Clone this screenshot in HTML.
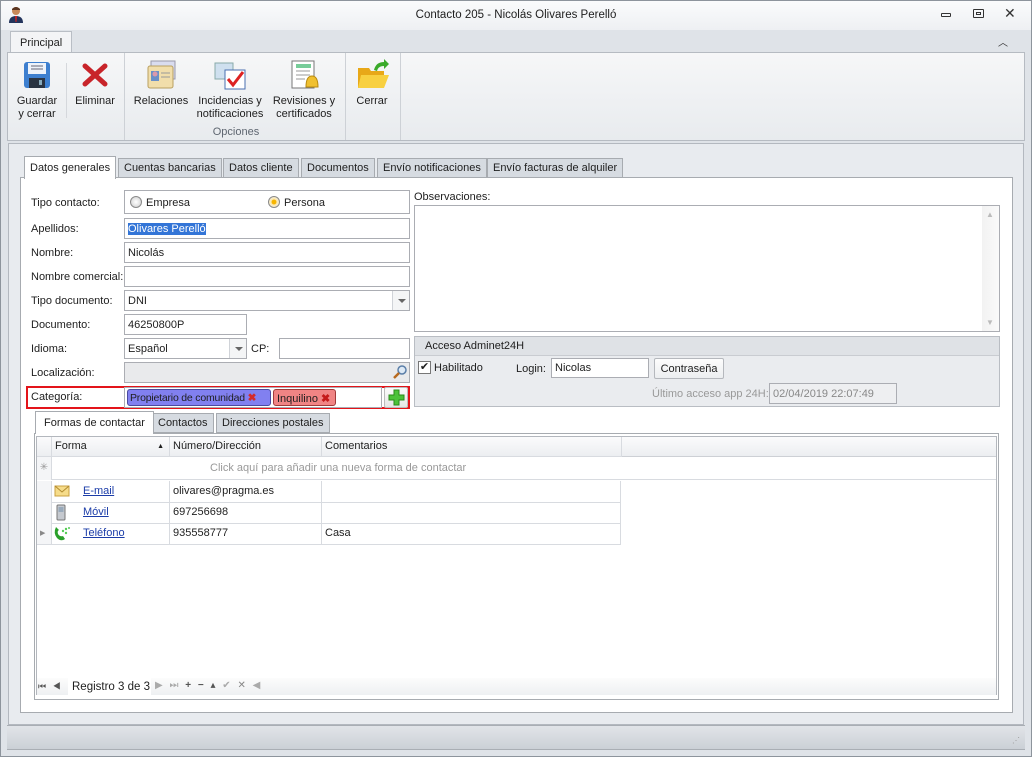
<!DOCTYPE html>
<html><head><meta charset="utf-8">
<style>
*{box-sizing:border-box;margin:0;padding:0}
body{width:1032px;height:757px;position:relative;overflow:hidden;font-family:"Liberation Sans",sans-serif;font-size:11px;color:#1e1e1e;background:#dfe3e8}
.a{position:absolute}
.inp{position:absolute;background:#fff;border:1px solid #abadb3;height:21px;padding:4px 3px 2px;white-space:nowrap}
.lbl{position:absolute;white-space:nowrap}
.tab{position:absolute;top:158px;height:20px;border:1px solid #a7abb0;background:#d6dbe1;padding:3px 5px;white-space:nowrap}
.btn{position:absolute;text-align:center;line-height:13px;font-size:11px}
.dd{position:absolute;right:0;top:0;width:17px;height:19px;border-left:1px solid #d0d3d8;background:#f4f5f6}
.dd:after{content:"";position:absolute;left:5px;top:8px;border:4px solid transparent;border-top:4px solid #666;border-bottom:0}
.cell{position:absolute;border-right:1px solid #d8dbe0;border-bottom:1px solid #d8dbe0;padding:4px 4px;white-space:nowrap}
a{color:#1b3ca8;text-decoration:underline}
</style></head><body>
<div class="a" style="left:0;top:0;width:1032px;height:757px;border:1px solid #8d949c;background:#dfe3e8"></div>
<div class="a" style="left:1px;top:1px;width:1030px;height:29px;background:linear-gradient(#fafbfc,#eef0f3)"></div>
<svg class="a" style="left:8px;top:6px" width="16" height="18"><circle cx="8" cy="5" r="4" fill="#c88a5a"/><path d="M4 3 Q8 -1 12 3 L12 4 L4 4Z" fill="#5a3520"/><path d="M1 17 Q1 10 8 10 Q15 10 15 17Z" fill="#23345c"/><path d="M7 10 L9 10 L8.5 16 L7.5 16Z" fill="#c22"/></svg>
<div class="lbl" style="left:0;width:1032px;text-align:center;top:9px;font-size:11.5px">Contacto 205 - Nicolás Olivares Perelló</div>
<div class="a" style="left:941px;top:13px;width:10px;height:4px;border:1px solid #333;border-radius:1px"></div>
<div class="a" style="left:973px;top:9px;width:11px;height:9px;border:1px solid #333;border-radius:1px"><div style="margin:2px;width:5px;height:3px;border:1px solid #333"></div></div>
<div class="lbl" style="left:1004px;top:5px;font-size:14px;color:#333">✕</div>
<div class="lbl" style="left:998px;top:34px;font-size:10px;color:#333">︿</div>
<div class="a" style="left:10px;top:31px;width:62px;height:22px;background:#f3f4f6;border:1px solid #b9bec5;border-bottom:none;padding:5px 9px">Principal</div>
<div class="a" style="left:7px;top:52px;width:1018px;height:89px;background:linear-gradient(#f6f7f8,#e8ebee);border:1px solid #b6bbc2"></div>
<div class="a" style="left:124px;top:53px;width:1px;height:87px;background:#cdd1d6"></div>
<div class="a" style="left:345px;top:53px;width:1px;height:87px;background:#cdd1d6"></div>
<div class="a" style="left:400px;top:53px;width:1px;height:87px;background:#cdd1d6"></div>
<div class="a" style="left:66px;top:63px;width:1px;height:55px;background:#d5d8dc"></div>
<svg class="a" style="left:23px;top:61px" width="28" height="28"><rect x="1" y="1" width="26" height="26" rx="3" fill="#3d7fcf"/><rect x="5" y="2" width="18" height="11" fill="#eef3fa"/><line x1="8" y1="5" x2="20" y2="5" stroke="#667" /><line x1="8" y1="8" x2="20" y2="8" stroke="#667"/><rect x="6" y="17" width="16" height="10" fill="#2a3442"/><rect x="16" y="19" width="3" height="5" fill="#8ab"/></svg>
<svg class="a" style="left:82px;top:63px" width="26" height="24"><path d="M3 3 L23 21 M23 3 L3 21" stroke="#c8242a" stroke-width="5" stroke-linecap="round"/></svg>
<svg class="a" style="left:145px;top:59px" width="32" height="32"><rect x="6" y="2" width="24" height="18" fill="#d9dcef" stroke="#99a"/><rect x="3" y="7" width="25" height="22" rx="2" fill="#f1deab" stroke="#b9a060"/><rect x="6" y="12" width="8" height="10" fill="#6a90c8"/><circle cx="10" cy="15" r="2.5" fill="#d9a"/><line x1="16" y1="14" x2="25" y2="14" stroke="#999"/><line x1="16" y1="18" x2="25" y2="18" stroke="#999"/></svg>
<svg class="a" style="left:213px;top:59px" width="34" height="32"><path d="M2 4 L20 4 L20 20 L2 20Z" fill="#cfe0ef" stroke="#8aa"/><rect x="12" y="11" width="20" height="19" fill="#fff" stroke="#4a6fb0"/><path d="M15 20 L20 26 L30 13" stroke="#d22" stroke-width="3" fill="none"/></svg>
<svg class="a" style="left:289px;top:59px" width="32" height="32"><rect x="3" y="2" width="22" height="27" fill="#fff" stroke="#777"/><rect x="7" y="5" width="15" height="4" fill="#7c9"/><line x1="7" y1="12" x2="21" y2="12" stroke="#999"/><line x1="7" y1="16" x2="21" y2="16" stroke="#999"/><line x1="7" y1="20" x2="16" y2="20" stroke="#999"/><path d="M17 28 Q17 17 23 17 Q29 17 29 28Z" fill="#f0c030" stroke="#b88a10"/></svg>
<svg class="a" style="left:356px;top:58px" width="34" height="32"><path d="M2 10 L13 10 L15 13 L28 13 L28 30 L2 30Z" fill="#e8a818"/><path d="M5 17 L33 17 L28 30 L2 30Z" fill="#f8d040"/><path d="M18 12 Q20 4 28 4 L28 1 L33 6 L28 11 L28 8 Q22 8 21 13Z" fill="#3aaa2a"/></svg>
<div class="btn" style="left:14px;top:95px;width:46px">Guardar<br>y cerrar</div>
<div class="btn" style="left:72px;top:95px;width:46px">Eliminar</div>
<div class="btn" style="left:131px;top:95px;width:60px">Relaciones</div>
<div class="btn" style="left:194px;top:95px;width:72px">Incidencias y<br>notificaciones</div>
<div class="btn" style="left:268px;top:95px;width:72px">Revisiones y<br>certificados</div>
<div class="btn" style="left:352px;top:95px;width:40px">Cerrar</div>
<div class="btn" style="left:200px;top:126px;width:72px;color:#5e6670">Opciones</div>
<div class="a" style="left:8px;top:143px;width:1016px;height:582px;border:1px solid #b3b8bf;background:#e8ebef"></div>
<div class="a" style="left:20px;top:177px;width:993px;height:536px;background:#fff;border:1px solid #a7abb0"></div>
<div class="tab" style="left:24px;top:156px;height:23px;background:#fff;border-bottom:none;padding-top:5px">Datos generales</div>
<div class="tab" style="left:118px">Cuentas bancarias</div>
<div class="tab" style="left:223px">Datos cliente</div>
<div class="tab" style="left:301px">Documentos</div>
<div class="tab" style="left:377px">Envío notificaciones</div>
<div class="tab" style="left:487px">Envío facturas de alquiler</div>
<div class="lbl" style="left:31px;top:197px">Tipo contacto:</div>
<div class="a" style="left:124px;top:190px;width:286px;height:24px;border:1px solid #abadb3;background:#fff"></div>
<div class="a" style="left:130px;top:196px;width:12px;height:12px;border-radius:50%;border:1px solid #8a8a8a;background:radial-gradient(#fff,#ccc)"></div>
<div class="lbl" style="left:146px;top:197px">Empresa</div>
<div class="a" style="left:268px;top:196px;width:12px;height:12px;border-radius:50%;border:1px solid #8a8a8a;background:radial-gradient(#f7b500 30%,#fde9b0 40%,#eee)"></div>
<div class="lbl" style="left:284px;top:197px">Persona</div>
<div class="lbl" style="left:31px;top:223px">Apellidos:</div>
<div class="inp" style="left:124px;top:218px;width:286px"><span style="background:#3375d7;color:#fff">Olivares Perelló</span></div>
<div class="lbl" style="left:31px;top:247px">Nombre:</div>
<div class="inp" style="left:124px;top:242px;width:286px">Nicolás</div>
<div class="lbl" style="left:31px;top:271px">Nombre comercial:</div>
<div class="inp" style="left:124px;top:266px;width:286px"></div>
<div class="lbl" style="left:31px;top:295px">Tipo documento:</div>
<div class="inp" style="left:124px;top:290px;width:286px">DNI<div class="dd"></div></div>
<div class="lbl" style="left:31px;top:319px">Documento:</div>
<div class="inp" style="left:124px;top:314px;width:123px">46250800P</div>
<div class="lbl" style="left:31px;top:343px">Idioma:</div>
<div class="inp" style="left:124px;top:338px;width:123px">Español<div class="dd"></div></div>
<div class="lbl" style="left:251px;top:343px">CP:</div>
<div class="inp" style="left:279px;top:338px;width:131px"></div>
<div class="lbl" style="left:31px;top:367px">Localización:</div>
<div class="inp" style="left:124px;top:362px;width:286px;background:#e9eaec"></div>
<svg class="a" style="left:392px;top:364px" width="16" height="16"><circle cx="10" cy="6" r="4" fill="#dde9f5" stroke="#5a7ea8" stroke-width="1.5"/><path d="M7 9 L2 14" stroke="#b86a20" stroke-width="2.5"/></svg>
<div class="a" style="left:26px;top:386px;width:384px;height:23px;border:2px solid #e3141a"></div>
<div class="lbl" style="left:31px;top:391px">Categoría:</div>
<div class="a" style="left:124px;top:387px;width:258px;height:21px;border:1px solid #abadb3;background:#fff"></div>
<div class="a" style="left:127px;top:389px;width:144px;height:17px;background:#8180f0;border:1px solid #4a4aa0;border-radius:3px;padding:2px 2px;white-space:nowrap;font-size:10.5px;letter-spacing:-0.2px;overflow:hidden">Propietario de comunidad <span style="color:#d42a2a;font-weight:bold">✖</span></div>
<div class="a" style="left:273px;top:389px;width:63px;height:17px;background:#f08484;border:1px solid #a03a3a;border-radius:3px;padding:2px 3px;white-space:nowrap;overflow:hidden">Inquilino <span style="color:#c41a1a;font-weight:bold">✖</span></div>
<div class="a" style="left:384px;top:387px;width:24px;height:21px;border:1px solid #bbb;background:linear-gradient(#fbfbfb,#e6e6e6);border-radius:2px"></div>
<svg class="a" style="left:388px;top:389px" width="17" height="17"><path d="M6 1H11V6H16V11H11V16H6V11H1V6H6Z" fill="#4cc23a" stroke="#2a8a1a"/></svg>
<div class="lbl" style="left:414px;top:191px">Observaciones:</div>
<div class="a" style="left:414px;top:205px;width:586px;height:127px;border:1px solid #abadb3;background:#fff"></div>
<div class="a" style="left:982px;top:206px;width:17px;height:125px;background:linear-gradient(90deg,#f2f2f2,#fafafa)"></div>
<div class="lbl" style="left:986px;top:210px;font-size:8px;color:#bbb">▲</div>
<div class="lbl" style="left:986px;top:318px;font-size:8px;color:#bbb">▼</div>
<div class="a" style="left:414px;top:336px;width:586px;height:71px;border:1px solid #b9bdc3;background:#eaecef"></div>
<div class="a" style="left:415px;top:337px;width:584px;height:19px;background:#dfe2e6;border-bottom:1px solid #c9ccd1;padding:3px 10px">Acceso Adminet24H</div>
<div class="a" style="left:418px;top:361px;width:13px;height:13px;border:1px solid #777;background:#fff;font-size:11px;line-height:11px;text-align:center">✔</div>
<div class="lbl" style="left:434px;top:362px">Habilitado</div>
<div class="lbl" style="left:516px;top:363px">Login:</div>
<div class="inp" style="left:551px;top:358px;width:98px;height:20px;padding-top:3px">Nicolas</div>
<div class="a" style="left:654px;top:358px;width:70px;height:21px;border:1px solid #b5b8bd;border-radius:2px;background:linear-gradient(#fdfdfd,#eceef0);text-align:center;padding-top:4px">Contraseña</div>
<div class="lbl" style="left:652px;top:388px;color:#999">Último acceso app 24H:</div>
<div class="inp" style="left:769px;top:383px;width:128px;height:21px;background:#eeeff1;color:#888">02/04/2019 22:07:49</div>
<div class="a" style="left:34px;top:433px;width:965px;height:267px;border:1px solid #a7abb0;background:#fff"></div>
<div class="tab" style="left:152px;top:413px">Contactos</div>
<div class="tab" style="left:216px;top:413px">Direcciones postales</div>
<div class="tab" style="left:35px;top:411px;height:23px;background:#fff;border-bottom:none;padding:5px 8px">Formas de contactar</div>
<div class="a" style="left:36px;top:436px;width:961px;height:259px;border:1px solid #b3b7bd;background:#fff"></div>
<div class="a" style="left:37px;top:437px;width:959px;height:20px;background:linear-gradient(#fbfbfc,#eceef1);border-bottom:1px solid #cdd0d5"></div>
<div class="cell" style="left:37px;top:437px;width:15px;height:20px"></div>
<div class="cell" style="left:51px;top:437px;width:119px;height:20px;padding-top:3px">Forma<span style="position:absolute;right:5px;font-size:7px;top:6px">▲</span></div>
<div class="cell" style="left:169px;top:437px;width:153px;height:20px;padding-top:3px">Número/Dirección</div>
<div class="cell" style="left:321px;top:437px;width:301px;height:20px;padding-top:3px">Comentarios</div>
<div class="a" style="left:37px;top:457px;width:959px;height:23px;border-bottom:1px solid #d8dbe0"></div>
<div class="a" style="left:37px;top:457px;width:15px;height:23px;background:#f4f5f7;border-right:1px solid #d8dbe0;color:#999;font-size:10px;text-align:center;padding-top:5px">✳</div>
<div class="lbl" style="left:210px;top:462px;color:#999">Click aquí para añadir una nueva forma de contactar</div>
<div class="cell" style="left:37px;top:481px;width:15px;height:22px;background:#f4f5f7"></div>
<div class="cell" style="left:51px;top:481px;width:119px;height:22px;padding-left:32px"><a>E-mail</a></div>
<div class="cell" style="left:169px;top:481px;width:153px;height:22px">olivares@pragma.es</div>
<div class="cell" style="left:321px;top:481px;width:300px;height:22px"></div>
<div class="cell" style="left:37px;top:502px;width:15px;height:22px;background:#f4f5f7"></div>
<div class="cell" style="left:51px;top:502px;width:119px;height:22px;padding-left:32px"><a>Móvil</a></div>
<div class="cell" style="left:169px;top:502px;width:153px;height:22px">697256698</div>
<div class="cell" style="left:321px;top:502px;width:300px;height:22px"></div>
<div class="cell" style="left:37px;top:523px;width:15px;height:22px;background:#f4f5f7;font-size:7px;color:#888;padding:6px 3px">▶</div>
<div class="cell" style="left:51px;top:523px;width:119px;height:22px;padding-left:32px"><a>Teléfono</a></div>
<div class="cell" style="left:169px;top:523px;width:153px;height:22px">935558777</div>
<div class="cell" style="left:321px;top:523px;width:300px;height:22px">Casa</div>
<svg class="a" style="left:54px;top:485px" width="16" height="13"><rect x="1" y="1" width="14" height="10" fill="#f6dc8a" stroke="#c9a040"/><path d="M1 1 L8 7 L15 1" stroke="#b08a30" fill="none"/></svg>
<svg class="a" style="left:56px;top:504px" width="10" height="17"><rect x="1" y="1" width="8" height="15" rx="1" fill="#c5c9cf" stroke="#777"/><rect x="2.5" y="3" width="5" height="5" fill="#9ab"/></svg>
<svg class="a" style="left:53px;top:525px" width="18" height="17"><path d="M3 2 Q0 8 4 13 Q8 17 12 14 L10 11 Q7 12 5 9 Q4 6 6 5Z" fill="#2aa02a"/><circle cx="10" cy="6" r="1.2" fill="#5c5"/><circle cx="13" cy="4" r="1.2" fill="#5c5"/><circle cx="13" cy="8" r="1.2" fill="#5c5"/><circle cx="16" cy="3" r="1" fill="#5c5"/></svg>
<div class="a" style="left:37px;top:678px;width:959px;height:17px;background:linear-gradient(#fcfcfc,#eef0f2)"></div>
<div class="lbl" style="left:38px;top:681px;font-size:9px;color:#555;letter-spacing:2px">⏮ ◀</div>
<div class="a" style="left:68px;top:678px;width:83px;height:17px;background:#fff;padding:3px 4px;white-space:nowrap;font-size:11.5px">Registro 3 de 3</div>
<div class="lbl" style="left:155px;top:680px;font-size:10px;color:#aaa;letter-spacing:2px">▶ ⏭ <span style="color:#555;font-weight:bold">+ − </span><span style="color:#555">▴</span> ✔ <span style="color:#888">✕</span> ◀</div>
<div class="a" style="left:7px;top:725px;width:1018px;height:25px;background:linear-gradient(#e1e4e8,#cbd0d6);border-top:1px solid #a9aeb4;border-bottom:1px solid #a9aeb4"></div>
<div class="lbl" style="left:1012px;top:736px;font-size:8px;color:#999">⋰</div>
</body></html>
